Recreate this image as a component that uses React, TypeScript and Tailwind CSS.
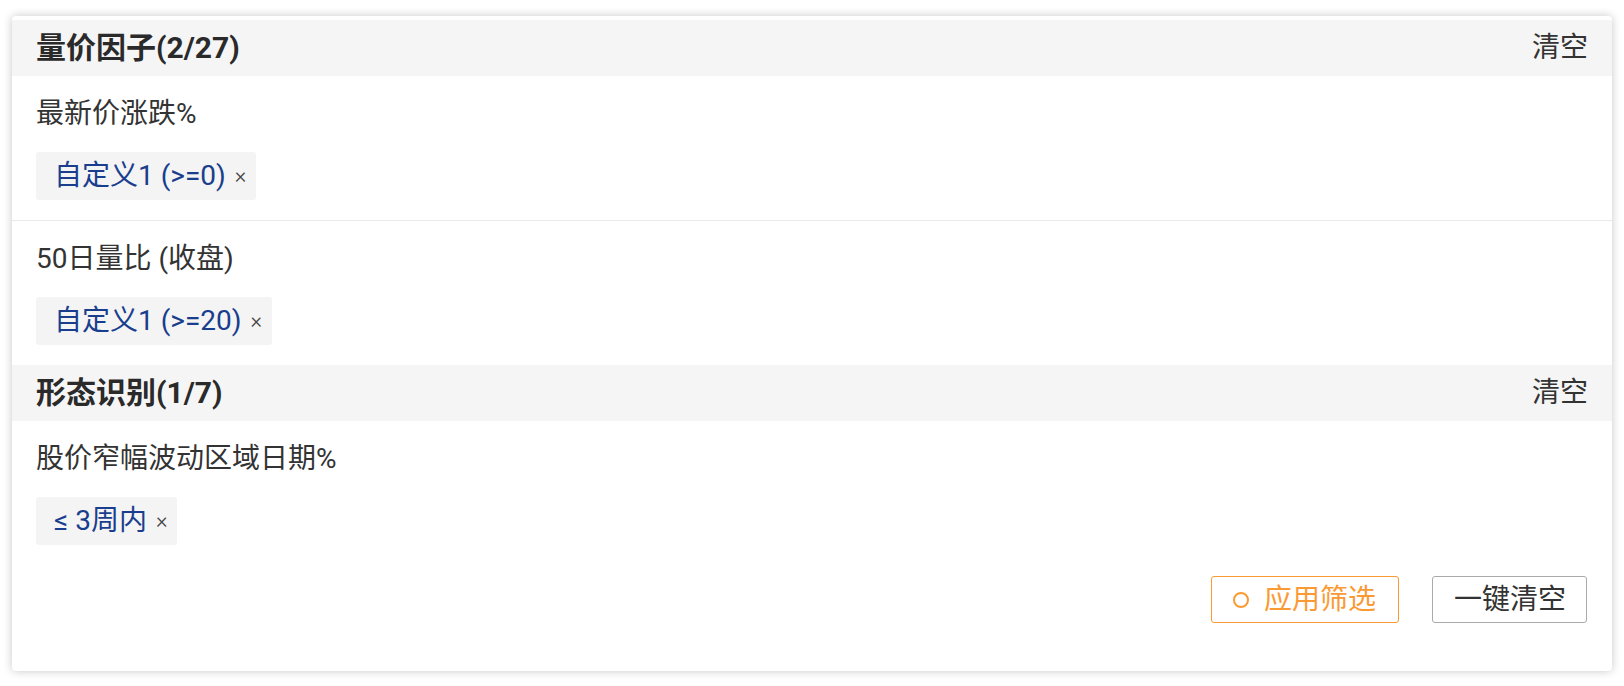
import React from "react";

const font = { fontFamily: 'Roboto, "Noto Sans CJK SC", sans-serif' };

function Tag({ text }: { text: string }) {
  return (
    <div className="inline-flex h-[48px] items-center rounded-[3px] bg-[#f4f4f4] pl-[18px] pr-[10px]">
      <span className="text-[28px] leading-none text-[#1a3e8e]">{text}</span>
      <span className="ml-[9px] text-[22px] font-light leading-none text-[#444]">×</span>
    </div>
  );
}

function Item({ label, tag, divider }: { label: string; tag: string; divider?: boolean }) {
  return (
    <div className={`px-[24px] pt-[18px] pb-[20px] ${divider ? "border-b border-[#e9e9e9]" : ""}`}>
      <div className="h-[40px] text-[28px] leading-[40px] text-[#333]">{label}</div>
      <div className="mt-[18px] flex">
        <Tag text={tag} />
      </div>
    </div>
  );
}

function Header({ title }: { title: string }) {
  return (
    <div className="flex h-[56px] items-center justify-between bg-[#f5f5f5] px-[24px]">
      <span className="text-[30px] font-bold leading-none text-[#2a2a2a]">{title}</span>
      <span className="text-[28px] leading-none text-[#333]">清空</span>
    </div>
  );
}

export default function App() {
  return (
    <div className="min-h-[686px] w-full bg-white pt-[16px] pb-[15px] px-[12px]" style={font}>
      <div className="rounded-[4px] bg-white pt-[4px] shadow-[0_0_10px_rgba(0,0,0,0.22)]">
        <Header title="量价因子(2/27)" />
        <Item label="最新价涨跌%" tag="自定义1 (>=0)" divider />
        <Item label="50日量比 (收盘)" tag="自定义1 (>=20)" />
        <Header title="形态识别(1/7)" />
        <Item label="股价窄幅波动区域日期%" tag="≤ 3周内" />
        <div className="flex justify-end gap-[33px] px-[25px] pt-[11px] pb-[48px]">
          <button className="flex h-[47px] items-center rounded-[3px] border border-[#fa9a35] pl-[21px] pr-[22px] text-[28px] leading-none text-[#fa9a35]">
            <span className="mr-[15px] inline-block h-[16px] w-[16px] rounded-full border-[2px] border-[#fa9a35]" />
            应用筛选
          </button>
          <button className="flex h-[47px] items-center rounded-[3px] border border-[#aaaaaa] pl-[21px] pr-[20px] text-[28px] leading-none text-[#333]">
            一键清空
          </button>
        </div>
      </div>
    </div>
  );
}
